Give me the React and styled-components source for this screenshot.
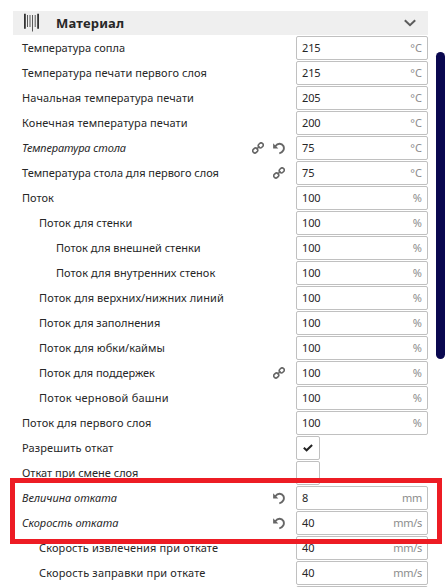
import React from "react";
import styled, { createGlobalStyle } from "styled-components";

const GlobalStyle = createGlobalStyle`
  *, *::before, *::after { box-sizing: border-box; }
  html, body { margin: 0; height: 100%; overflow: hidden; background: #fff; }
`;

const Page = styled.main`
  position: relative;
  display: flex;
  height: 587px;
  width: 447px;
  padding: 11px 2px 0 13px;
  overflow: hidden;
  background: #fff;
  color: #272727;
  font-family: "Noto Sans", sans-serif;
  font-size: 11px;
`;

const Panel = styled.section`
  width: 415px;
  flex: none;
`;

const Header = styled.header`
  display: flex;
  align-items: center;
  height: 24px;
  padding: 0 12px 0 9px;
  background: #efefef;
`;

const Title = styled.h1`
  flex: 1;
  margin: 0 0 0 14px;
  font-size: 13px;
  line-height: 24px;
  font-weight: 700;
  letter-spacing: 0.2px;
`;

const Rows = styled.div`
  display: flex;
  flex-direction: column;
  gap: 1px;
  padding-top: 1px;
`;

const Row = styled.div`
  display: flex;
  flex: none;
  height: 24px;
  padding-left: ${({ $level }) => 9 + $level * 17}px;
`;

const Label = styled.span`
  flex: 1;
  line-height: 24px;
  white-space: nowrap;
  font-style: ${({ $changed }) => ($changed ? "italic" : "normal")};
  letter-spacing: ${({ $tracking }) => $tracking}px;
`;

const Actions = styled.span`
  display: flex;
  align-items: center;
  gap: 9px;
  margin-right: 11px;

  svg { display: block; }
`;

const Field = styled.div`
  display: flex;
  justify-content: space-between;
  width: 132px;
  height: 24px;
  padding: 0 5px;
  border: 1px solid #c0c0c0;
  border-radius: 2px;
  background: #fff;
  line-height: 22px;
`;

const Value = styled.span`
  letter-spacing: -0.15px;
`;

const Unit = styled.span`
  color: #8c8c8c;
  letter-spacing: ${({ $tight }) => ($tight ? "-0.3px" : "0")};
`;

const CheckSlot = styled.div`
  width: 132px;
`;

const Checkbox = styled.div`
  display: flex;
  align-items: center;
  justify-content: center;
  width: 24px;
  height: 24px;
  border: 1px solid #c0c0c0;
  border-radius: 2px;
`;

const Scrollbar = styled.div`
  flex: none;
  width: 9px;
  height: 307px;
  margin: 41px 0 0 8px;
  border-radius: 5px;
  background: #0a0850;
`;

const Highlight = styled.div`
  position: absolute;
  left: 10px;
  top: 478px;
  width: 432px;
  height: 66px;
  border: 5px solid #ed1c24;
`;

const MaterialIcon = () => (
  <svg width="20" height="20" viewBox="0 0 20 20" fill="#333">
    <path d="M2 .7h1.8v15H2zM15.2.7H17v15h-1.8z" />
    <path d="M5 2h1v12H5zM7.5 2h1v12h-1zM10 2h1v16.5h-1zM12.7 2h1v12h-1z" opacity=".8" />
  </svg>
);

const ChevronIcon = () => (
  <svg width="12" height="8" viewBox="0 0 12 8" fill="none" stroke="#5c5c5c" strokeWidth="2">
    <path d="M.8 1.2 6 6.2l5.2-5" />
  </svg>
);

const LinkIcon = () => (
  <svg width="12" height="12" viewBox="0 0 13 13" fill="none" stroke="#666" strokeWidth="1.7">
    <rect x="-2.8" y="-2.3" width="5.6" height="4.6" rx="2.2" transform="translate(3.5 9.2) rotate(-45)" />
    <rect x="-2.8" y="-2.3" width="5.6" height="4.6" rx="2.2" transform="translate(9.5 3.7) rotate(-45)" />
    <path d="M4.8 7.9 8.2 4.8" />
  </svg>
);

const ResetIcon = () => (
  <svg width="12" height="13" viewBox="0 0 12 13">
    <path d="M2.3 4.2C4.7 1 8.6.9 10.4 4c1.4 3.1-.5 6.6-4.1 7.4" fill="none" stroke="#666" strokeWidth="1.9" />
    <path d="M.1 1.3v5.2h5.2z" fill="#666" />
  </svg>
);

const CheckIcon = () => (
  <svg width="10" height="8" viewBox="0 0 10 8" fill="none" stroke="#222" strokeWidth="2">
    <path d="M.8 3.8 3.6 6.3 9.1 1" />
  </svg>
);

const settings = [
  { label: "Температура сопла", value: "215", unit: "°C" },
  { label: "Температура печати первого слоя", value: "215", unit: "°C", tracking: 0.07 },
  { label: "Начальная температура печати", value: "205", unit: "°C", tracking: 0.08 },
  { label: "Конечная температура печати", value: "200", unit: "°C", tracking: 0.11 },
  { label: "Температура стола", value: "75", unit: "°C", linked: true, changed: true, tracking: -0.1 },
  { label: "Температура стола для первого слоя", value: "75", unit: "°C", linked: true, tracking: -0.03 },
  { label: "Поток", value: "100", unit: "%" },
  { label: "Поток для стенки", value: "100", unit: "%", level: 1 },
  { label: "Поток для внешней стенки", value: "100", unit: "%", level: 2 },
  { label: "Поток для внутренних стенок", value: "100", unit: "%", level: 2, tracking: 0.04 },
  { label: "Поток для верхних/нижних линий", value: "100", unit: "%", level: 1, tracking: 0.07 },
  { label: "Поток для заполнения", value: "100", unit: "%", level: 1 },
  { label: "Поток для юбки/каймы", value: "100", unit: "%", level: 1, tracking: 0.05 },
  { label: "Поток для поддержек", value: "100", unit: "%", level: 1, linked: true, tracking: -0.04 },
  { label: "Поток черновой башни", value: "100", unit: "%", level: 1, tracking: 0.2 },
  { label: "Поток для первого слоя", value: "100", unit: "%", tracking: 0.05 },
  { label: "Разрешить откат", checked: true, tracking: 0.14 },
  { label: "Откат при смене слоя", checked: false },
  { label: "Величина отката", value: "8", unit: "mm", changed: true },
  { label: "Скорость отката", value: "40", unit: "mm/s", changed: true },
  { label: "Скорость извлечения при откате", value: "40", unit: "mm/s", level: 1, tracking: 0.13 },
  { label: "Скорость заправки при откате", value: "40", unit: "mm/s", level: 1, tracking: 0.17 },
  { label: "", value: "", unit: "" },
];

function Setting({ label, value, unit, level = 0, tracking = 0, linked, changed, checked }) {
  return (
    <Row $level={level}>
      <Label $changed={changed} $tracking={tracking}>{label}</Label>
      <Actions>
        {linked && <LinkIcon />}
        {changed && <ResetIcon />}
      </Actions>
      {checked === undefined ? (
        <Field>
          <Value>{value}</Value>
          <Unit $tight={unit.startsWith("mm")}>{unit}</Unit>
        </Field>
      ) : (
        <CheckSlot>
          <Checkbox>{checked && <CheckIcon />}</Checkbox>
        </CheckSlot>
      )}
    </Row>
  );
}

export default function App() {
  return (
    <>
      <GlobalStyle />
      <Page>
        <Panel>
          <Header>
            <MaterialIcon />
            <Title>Материал</Title>
            <ChevronIcon />
          </Header>
          <Rows>
            {settings.map((setting, index) => (
              <Setting key={index} {...setting} />
            ))}
          </Rows>
        </Panel>
        <Scrollbar />
        <Highlight />
      </Page>
    </>
  );
}
